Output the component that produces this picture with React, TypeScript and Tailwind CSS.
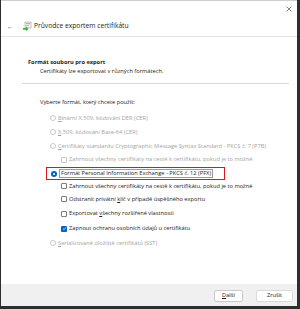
import React from "react";

const font = { fontFamily: '"Open Sans", "Noto Sans", sans-serif' };

function Radio({ checked, disabled }: { checked?: boolean; disabled?: boolean }) {
  if (checked) {
    return (
      <span className="w-[6px] h-[6px] rounded-full bg-[#0067c0] flex items-center justify-center shrink-0">
        <span className="w-[2px] h-[2px] rounded-full bg-white" />
      </span>
    );
  }
  return (
    <span
      className={
        "w-[6px] h-[6px] rounded-full border shrink-0 " +
        (disabled ? "border-[#c8c8c8]" : "border-[#6b6b6b]")
      }
    />
  );
}

function Check({ checked, disabled }: { checked?: boolean; disabled?: boolean }) {
  if (checked) {
    return (
      <span className="w-[6px] h-[6px] rounded-[1px] bg-[#0067c0] flex items-center justify-center shrink-0">
        <svg width="5" height="5" viewBox="0 0 10 10">
          <path d="M2 5.2 L4.2 7.3 L8 2.8" stroke="white" strokeWidth="1.4" fill="none" />
        </svg>
      </span>
    );
  }
  return (
    <span
      className={
        "w-[6px] h-[6px] rounded-[1px] border shrink-0 " +
        (disabled ? "border-[#c8c8c8]" : "border-[#7a7a7a]")
      }
    />
  );
}

function WizardIcon() {
  return (
    <svg width="10" height="10" viewBox="0 0 10 10">
      <rect x="3" y="1" width="6" height="6" fill="#f4f4f4" stroke="#8a8a8a" strokeWidth="0.5" />
      <rect x="4" y="2.5" width="4" height="0.6" fill="#4a7fc0" />
      <rect x="4" y="4" width="3" height="0.6" fill="#c0a040" />
      <path d="M1 7 L4 7 L4 5.5 L6.5 8 L4 10 L4 8.8 L1 8.8 Z" fill="#3fae3a" />
    </svg>
  );
}

export default function App() {
  return (
    <div className="w-[300px] h-[309px] bg-[#2e2e2e] text-[5.7px] text-[#1b1b1b]" style={font}>
      <div className="ml-[1px] w-[296px] h-[306px] bg-white border-t border-[#cfcfcf] flex flex-col">
        {/* header */}
        <div className="h-[36px] border-b border-[#e3e3e3] flex flex-col">
          <div className="h-[15px] flex items-center justify-end pr-[5px] pt-[1px]">
            <svg width="6" height="6" viewBox="0 0 10 10">
              <path d="M1 1 L9 9 M9 1 L1 9" stroke="#555" strokeWidth="1.2" />
            </svg>
          </div>
          <div className="h-[20px] flex items-center pl-[6px]">
            <span className="text-[#555] text-[7px] leading-none w-[15px]">←</span>
            <WizardIcon />
            <span className="ml-[2px] text-[6.7px]">Průvodce exportem certifikátu</span>
          </div>
        </div>

        {/* top section */}
        <div className="pt-[21px] pl-[27px] pr-[8px]">
          <div className="h-[8px] flex items-center font-bold">Formát souboru pro export</div>
          <div className="h-[10px] flex items-center pl-[12px]">
            Certifikáty lze exportovat v různých formátech.
          </div>
        </div>
        <div className="mt-[7px] ml-[21px] mr-[8px] border-t border-[#d6d6d6]" />

        {/* options */}
        <div className="pl-[39px] pt-[12px]">
          <div className="h-[13px] flex items-center">Vyberte formát, který chcete použít:</div>
        </div>
        <div className="pl-[49px] pt-[2px] flex flex-col">
          <div className="h-[14px] flex items-center gap-[2px] text-[#a3a3a3]">
            <Radio disabled />
            <span>
              <u>B</u>inární X.509, kódování DER (CER)
            </span>
          </div>
          <div className="h-[14px] flex items-center gap-[2px] text-[#a3a3a3]">
            <Radio disabled />
            <span>
              <u>X</u>.509, kódování Base-64 (CER)
            </span>
          </div>
          <div className="h-[14px] flex items-center gap-[2px] text-[#a3a3a3]">
            <Radio disabled />
            <span>
              <u>C</u>ertifikáty standardu Cryptographic Message Syntax Standard - PKCS č. 7 (P7B)
            </span>
          </div>
          <div className="h-[13px] flex items-center gap-[2px] pl-[11px] text-[#a3a3a3]">
            <Check disabled />
            <span>Zahrnout všechny certifikáty na cestě k certifikátu, pokud je to možné</span>
          </div>
          <div className="h-[13px] mt-[1px] -ml-[4px] w-[179px] border border-[#e0141e] flex items-center gap-[2px] pl-[4px]">
            <Radio checked />
            <span className="border border-[#9a9a9a] px-[1px] leading-[7px]">
              Formát Personal Information Exchange - PKCS č. 12 (PFX)
            </span>
          </div>
          <div className="h-[12px] flex items-center gap-[2px] pl-[11px]">
            <Check />
            <span>Zahrnout všechny certifikáty na cestě k certifikátu, pokud je to možné</span>
          </div>
          <div className="h-[14px] flex items-center gap-[2px] pl-[11px]">
            <Check />
            <span>
              Odstranit privátní <u>k</u>líč v případě úspěšného exportu
            </span>
          </div>
          <div className="h-[15px] flex items-center gap-[2px] pl-[11px]">
            <Check />
            <span>
              Exportovat <u>v</u>šechny rozšířené vlastnosti
            </span>
          </div>
          <div className="h-[15px] flex items-center gap-[2px] pl-[11px]">
            <Check checked />
            <span>Zapnout ochranu osobních údajů u certifikátu</span>
          </div>
          <div className="h-[14px] flex items-center gap-[2px] text-[#a3a3a3]">
            <Radio disabled />
            <span>
              <u>S</u>erializované úložiště certifikátů (SST)
            </span>
          </div>
        </div>

        <div className="flex-1" />

        {/* footer */}
        <div className="h-[22px] bg-[#f0f0f0] flex items-center justify-end gap-[13px] pr-[4px] pt-[1px]">
          <button className="w-[29px] h-[12px] bg-white border border-[#c9c9c9] rounded-[2px] text-[5.7px] flex items-center justify-center">
            <span>
              <u>D</u>alší
            </span>
          </button>
          <button className="w-[37px] h-[12px] bg-white border border-[#dadada] rounded-[2px] text-[5.7px] flex items-center justify-center">
            Zrušit
          </button>
        </div>
      </div>
    </div>
  );
}
